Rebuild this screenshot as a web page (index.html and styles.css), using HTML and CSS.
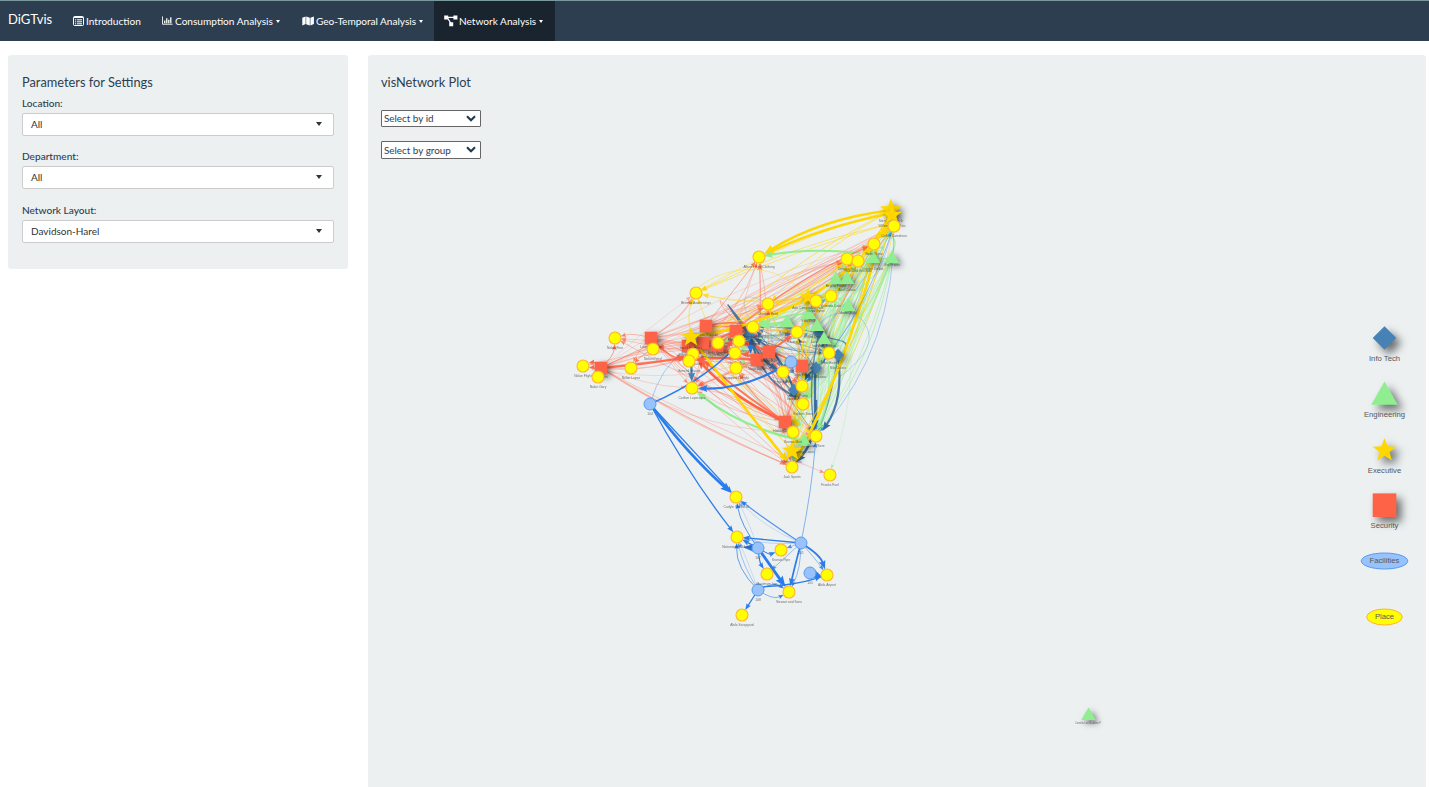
FILE: index.html
```html
<!DOCTYPE html>
<html lang="en">
<head>
<meta charset="utf-8">
<title>DiGTvis</title>
<link rel="stylesheet" href="styles.css">
</head>
<body>
<nav class="navbar">
  <span class="brand">DiGTvis</span>
  <a class="tab tab-intro"><svg class="icon" width="11" height="10" viewBox="0 0 11 10"><rect x=".5" y=".5" width="10" height="9" rx="1" fill="none" stroke="#fff"/><path d="M1 1.5h9M2 3.8h1.2M4 3.8h5M2 5.8h1.2M4 5.8h5M2 7.8h1.2M4 7.8h5" stroke="#fff"/></svg><span>Introduction</span></a>
  <a class="tab tab-consumption"><svg class="icon" width="11" height="10" viewBox="0 0 12 10"><path d="M.5 0v8.5H11.5" fill="none" stroke="#fff"/><path d="M3 7.5V4.5M5.2 7.5V2M7.4 7.5V3.5M9.6 7.5V1" stroke="#fff" stroke-width="1.4"/></svg><span>Consumption Analysis</span><i class="caret"></i></a>
  <a class="tab tab-geo"><svg class="icon" width="12" height="10" viewBox="0 0 12.6 10"><path d="M.3 1.6 3.8.2v8L.3 9.8zM4.4.2l3.8 1.4v8.2L4.4 8.3zM8.8 1.6 12.5.2v8L8.8 9.8z" fill="#fff"/></svg><span>Geo-Temporal Analysis</span><i class="caret"></i></a>
  <a class="tab tab-network"><svg class="icon" width="14" height="12" viewBox="0 0 14 12"><path d="M3 2.3h8M3.5 3l3.5 5.5" stroke="#fff" stroke-width="1.3"/><path d="M.2.5h4v4h-4zM9.4.5h4v4h-4zM5.2 7.2h4v4h-4z" fill="#fff"/></svg><span>Network Analysis</span><i class="caret"></i></a>
</nav>
<main class="layout">
  <section class="panel settings">
    <h4 class="title">Parameters for Settings</h4>
    <div class="field"><label class="label">Location:</label><div class="select"><span>All</span><i class="arrow"></i></div></div>
    <div class="field"><label class="label">Department:</label><div class="select"><span>All</span><i class="arrow"></i></div></div>
    <div class="field"><label class="label">Network Layout:</label><div class="select"><span>Davidson-Harel</span><i class="arrow"></i></div></div>
  </section>
  <section class="panel plot">
    <h4 class="title">visNetwork Plot</h4>
    <div class="picker"><span>Select by id</span><svg width="10" height="7" viewBox="0 0 10 7"><path d="M1 1.2 5 5.2 9 1.2" fill="none" stroke="#22384d" stroke-width="2.1"/></svg></div>
    <div class="picker"><span>Select by group</span><svg width="10" height="7" viewBox="0 0 10 7"><path d="M1 1.2 5 5.2 9 1.2" fill="none" stroke="#22384d" stroke-width="2.1"/></svg></div>
    <svg class="network" id="network" viewBox="381 166 1032 621" width="1032" height="621"></svg>
  </section>
</main>
<script src="network.js"></script>
</body>
</html>
```
FILE: styles.css
```css
* { box-sizing: border-box; }
body { margin: 0; height: 787px; overflow: hidden; background: #fff; color: #2c3e50; font-family: Lato, sans-serif; font-size: 10px; }
.navbar { display: flex; height: 41px; background: #2c3e50; border-top: 1px solid #7b9a9d; color: #fff; }
.brand { width: 63px; padding: 10px 0 0 8px; font-size: 13px; line-height: 17px; }
.tab { display: flex; align-items: center; height: 40px; padding: 0 10px; font-size: 10.1px; white-space: nowrap; }
.icon { flex: none; margin-right: 2px; }
.tab-network .icon { margin-right: 1px; }
.tab-intro { width: 89px; }
.tab-consumption { width: 140px; }
.tab-geo { width: 142px; }
.tab-geo span { letter-spacing: -.03px; }
.tab-network { width: 121px; background: #1a242f; }
.caret { width: 0; height: 0; margin-left: 3px; border: 2.5px solid transparent; border-top: 3px solid #fff; border-bottom: 0; }
.layout { display: grid; grid-template-columns: 340px 1058px; gap: 20px; align-items: start; padding: 14px 0 0 8px; }
.panel { background: #ecf0f1; border-radius: 3px; padding: 19px 14px 0; }
.settings { height: 214px; }
.title { margin: 0; font-size: 12.8px; line-height: 17px; font-weight: 400; }
.label { display: block; line-height: 14px; font-size: 10.1px; font-weight: 500; }
.field { height: 53.3px; }
.settings .title { margin-bottom: 5px; }
.select { display: flex; align-items: center; justify-content: space-between; height: 23px; margin-top: 3px; padding: 0 11px 1px 8px; background: #fff; border: 1px solid #ccc; border-radius: 2px; color: #333; }
.arrow { border: 3.5px solid transparent; border-top: 4px solid #333; border-bottom: 0; }
.plot { height: 732px; padding: 19px 13px 0; border-bottom-left-radius: 0; border-bottom-right-radius: 0; }
.plot .title { margin-bottom: 19px; }
.picker { display: flex; align-items: center; justify-content: space-between; width: 100px; height: 17px; padding: 0 4px 1px 2px; background: #fff; border: 1px solid #666; border-radius: 1px; margin-bottom: 14px; font-size: 9.9px; }
.picker + .picker { margin-bottom: 7px; height: 18px; }
.network { display: block; }
.node-label { font-family: "Liberation Sans", Arial, sans-serif; font-size: 3.3px; text-anchor: middle; fill: #343434; opacity: .7; }
.legend-label { font-family: "Liberation Sans", Arial, sans-serif; font-size: 7.7px; text-anchor: middle; fill: #55585a; }
.shadowed { filter: drop-shadow(3px 3px 3px rgba(0, 0, 0, .5)); }
.legend-shape { filter: drop-shadow(5px 5px 4px rgba(0, 0, 0, .55)); }
```
FILE: network.js
```javascript
const root = document.getElementById('network');
const NS = 'http://www.w3.org/2000/svg';
const RED = '#ff6347', GREEN = '#90ee90', GOLD = '#ffd700', BLUE = '#2b7ce9', NAVY = '#4682b4', DEEP = '#34689a';

function add(tag, attrs, text) {
  const el = document.createElementNS(NS, tag);
  for (const key in attrs) el.setAttribute(key, attrs[key]);
  if (text) el.textContent = text;
  root.appendChild(el);
  return el;
}

/* Curved edge with a notched arrowhead; bend is a fraction of the edge length. */
function edge(x1, y1, x2, y2, color, width, opacity, bend, gap = 6) {
  const dx = x2 - x1, dy = y2 - y1, len = Math.hypot(dx, dy) || 1;
  const cx = (x1 + x2) / 2 - dy * bend, cy = (y1 + y2) / 2 + dx * bend;
  const tl = Math.hypot(x2 - cx, y2 - cy) || 1;
  const ux = (x2 - cx) / tl, uy = (y2 - cy) / tl;
  const tx = x2 - ux * gap, ty = y2 - uy * gap;
  const s = 3 + width * 2.9, bx = tx - ux * s, by = ty - uy * s, w = s * .38;
  add('path', { d: `M${x1} ${y1}Q${cx} ${cy} ${bx + ux * s * .2} ${by + uy * s * .2}`, fill: 'none', stroke: color, 'stroke-width': width, 'stroke-opacity': opacity });
  if (len > 8) add('path', { d: `M${tx} ${ty}L${bx - uy * w} ${by + ux * w}L${bx + ux * s * .15} ${by + uy * s * .15}L${bx + uy * w} ${by - ux * w}Z`, fill: color, opacity: Math.min(1, opacity + .3) });
}

const places = [
  [759,257,"Albert's Fine Clothing"],[696,293,'Brewed Awakenings'],[768,304,'Chostus Hotel'],[615,338,'Nolan Fine'],
  [583,366,'Nolan Flight'],[598,377,'Nolan Gary'],[631,368,'Nolan Lopez'],[653,349,'Nolan Petrol'],
  [894,226,'Coffee Cameleon'],[874,244,'Bean There'],[847,259,'Desafio Golf'],[858,261,'Hallowed Grounds'],
  [831,296,'Katerina Cafe'],[816,301,'Guys Gyros'],[753,327,'Hippokampos'],[797,332,'Ouzeri Elian'],
  [739,341,'Kalami Kafenion'],[718,343,'Abila Zacharo'],[735,353,'GasTech'],[693,354,'Gelatogalore'],
  [689,361,'General Grocer'],[736,368,'Shoppers Delight'],[692,388,'Carlton Laperouse'],[829,353,'Brew Been'],
  [783,372,'Frydos Auto'],[802,386,'U-Pump'],[803,404,'Roberts Sons'],[793,432,'Kronos Mart'],
  [816,436,'Bean There'],[792,467,'Jack Sports'],[830,475,'Franks Fuel'],[736,497,'Carlyle Chemical'],
  [737,537,'Nationwide Refinery'],[781,550,'Kronos Pipe'],[767,574,'Maximum Iron'],[789,592,'Stewart and Sons'],
  [827,575,'Abila Airport'],[742,615,'Abila Scrapyard']
];
const squares = [[601,368],[651,338],[706,326],[736,331],[688,346],[703,343],[717,346],[757,360],[769,352],[802,366],[785,422]];
const triangles = [[892,258],[873,258],[836,279],[847,279],[848,306],[787,322],[809,314],[817,326],[824,339],[804,441]];
const diamonds = [[749,335],[819,333],[838,355],[816,368],[794,390]];
const facilities = [[791,362,'106'],[650,404,'104'],[758,548,'107'],[801,543,'101'],[810,573,'105'],[758,590,'108']];

/* Faint one-off visits of every employee to the places nearby */
let seed = 11;
const rand = () => (seed = (seed * 16807) % 2147483647) / 2147483647;
function visits(sources, targets, color, chance, opacity, east = false) {
  sources.forEach(s => targets.forEach(i => {
    if (rand() > chance) return;
    const p = places[i];
    let bend = (rand() - .5) * .3;
    if (east) bend = -Math.sign(p[1] - s[1]) * Math.abs(bend) * .85;
    edge(s[0], s[1], p[0], p[1], color, rand() < .1 ? 1.4 : .8, opacity * (.6 + rand() * .7), bend);
  }));
}
visits([[601,368],[651,338]], [1,2,8,9,10,12,14,15,16,18,19,20,22,24,27,29,6], RED, .8, .34);
visits(squares.slice(2), [0,8,9,10,11,2,12,13,14,15,16,17,18,21,22,23,24,25,27], RED, .64, .36);
visits(squares.slice(1), [3,4,7,14,16,18,19,22,24,26,27,28,29], RED, .3, .38);
visits(triangles.slice(0, 9), [8,9,10,11,12,13,15,23,28,27,26,25], GREEN, .72, .48, true);
visits(triangles, [14,15,17,18,21,24,29], GREEN, .45, .42);
visits([[892,258],[873,250],[848,306]], [23,25,26,27,28,29], GREEN, .8, .45, true);
visits(diamonds, [8,9,12,14,15,16,23,24,25,26,28], BLUE, .3, .35, true);
visits(diamonds, [14,15,16,23,24,25,26,28], DEEP, .45, .6);
visits([[892,210],[808,297],[691,337],[792,450]], [1,2,8,9,12,13,15,19,25,27,28], GOLD, .8, .6);

add('path', { d: 'M753 330C735 318 719 298 720 301C721 309 741 326 770 348', fill: 'none', stroke: RED, 'stroke-width': .9, opacity: .55 });
add('path', { d: 'M749 335C744 330 727 303 728 305C735 315 750 326 757 360', fill: 'none', stroke: DEEP, 'stroke-width': 1.5, opacity: .85 });
add('path', { d: 'M817 326C830 310 853 309 863 321C877 340 866 356 841 376', fill: 'none', stroke: BLUE, 'stroke-width': .7, opacity: .4 });
add('path', { d: 'M820 336C835 340 850 340 845 348', fill: 'none', stroke: DEEP, 'stroke-width': 1.4, opacity: .7 });
add('path', { d: 'M768 304C745 291 742 298 746 312L753 327', fill: 'none', stroke: '#a9b5bd', 'stroke-width': .7, opacity: .7 });
add('path', { d: 'M808 297C770 252 715 272 698 288', fill: 'none', stroke: GOLD, 'stroke-width': .8, opacity: .5 });
add('path', { d: 'M892 252C901 238 890 230 866 244', fill: 'none', stroke: GREEN, 'stroke-width': 1.4, opacity: .7 });

[
  [892,210,759,257,GOLD,2.5,1,.11],[892,213,759,257,GOLD,2.4,1,.06],[892,212,882,244,GOLD,2.5,1,.08],[894,220,874,244,GOLD,2.8,1,0],
  [880,232,858,261,GOLD,2.6,1,0],[808,297,753,327,GOLD,1.4,.8,-.05],
  [706,330,847,260,GOLD,1.2,.7,.12],
  [880,226,696,293,GOLD,.9,.6,.06],[691,337,696,293,GOLD,1,.6,-.16],
  [885,225,696,293,GOLD,.9,.55,.03],[860,253,758,257,GREEN,2,1,.07],[804,441,692,388,GREEN,2.3,1,-.12],
  [892,258,874,244,GREEN,1.5,.8,-.5],[892,258,816,436,GREEN,.9,.6,-.12],[892,258,803,404,GREEN,1.3,.5,-.1],
  [848,306,829,475,GREEN,.7,.4,-.12],[836,279,803,404,GREEN,1.5,.65,-.12],[824,339,815,436,GREEN,1.6,.7,-.17],
  [787,322,753,327,GREEN,3,.9,0],[809,314,753,327,GREEN,1.7,.8,.1],[892,258,829,353,GREEN,1.4,.5,-.1],
  [601,368,693,356,RED,2.3,.9,.02],[651,338,689,361,RED,1.6,.8,.15],[785,422,693,354,RED,2.7,1,-.1],
  [785,422,699,356,RED,2,.85,-.04],[785,422,736,368,RED,1.2,.6,-.1],[769,352,797,332,RED,1.8,.9,0],
  [802,366,718,343,RED,2,.8,.12],[736,331,689,361,RED,2.2,.8,.1],[706,326,753,327,RED,1.6,.8,-.12],
  [717,346,874,244,RED,1.3,.7,-.08],[601,368,615,338,RED,1,.6,.2],[601,364,583,364,RED,1,.7,.1],[601,370,583,368,RED,1,.6,.1],
  [757,360,735,353,RED,1.8,.8,.1],[651,338,792,467,RED,.7,.35,.07],[601,368,793,467,RED,.7,.35,.05],
  [601,368,830,475,RED,.7,.4,.03],[601,368,692,388,RED,.7,.35,.08],[651,338,785,422,RED,.8,.5,.12],
  [651,338,615,338,RED,.8,.5,.15],[653,349,631,368,RED,.8,.6,.1],
  [757,360,689,361,RED,2.4,.9,.06],[769,352,736,341,RED,2.2,.8,.06],
  [691,354,692,388,NAVY,2.2,1,0],[838,355,819,436,DEEP,2.2,.9,-.19],[749,335,783,372,DEEP,1.9,.9,.18],
  [815,368,815,436,DEEP,2.4,.9,0],[816,400,792,467,DEEP,2.4,.9,-.2],[816,368,802,386,DEEP,1.6,.9,.1],
  [794,390,749,335,DEEP,1.8,.9,.18],[819,333,816,436,DEEP,1.4,.7,.1],[749,335,802,400,DEEP,1.8,.8,.22],
  [691,337,858,261,GOLD,2.6,1,.14],[691,337,792,467,GOLD,2.5,1,.01],[878,244,792,467,GOLD,2.6,1,-.06],[869,261,792,467,GOLD,1.3,.8,-.08],
  [887,235,792,450,GOLD,1.2,.7,-.09],
  [791,362,692,388,BLUE,2.2,1,-.15],[650,404,753,327,BLUE,1.4,1,.12],[750,335,751,360,BLUE,2,1,0],
  [650,404,736,497,BLUE,2.8,1,.05],[650,404,736,497,BLUE,1.3,1,0],[650,404,737,537,BLUE,1.3,1,.04],
  [650,404,693,345,BLUE,.7,.5,-.18],[801,543,816,436,BLUE,.9,.6,.03],[894,226,816,436,BLUE,.7,.5,-.19],
  [894,226,803,386,BLUE,1,.45,-.1],[758,548,736,497,BLUE,1,.8,-.12],[758,548,736,497,BLUE,.6,.3,.03],
  [801,543,736,497,BLUE,1.2,.8,-.02],[801,543,736,497,BLUE,.7,.3,-.11],[801,543,737,537,BLUE,1.4,1,0],
  [801,543,737,537,BLUE,.7,.35,-.08],[758,548,737,547,BLUE,3,1,0],[758,548,737,537,BLUE,1.4,1,0],
  [758,548,789,592,BLUE,2.8,1,0],[758,548,767,574,BLUE,1.2,1,.12],[758,548,781,550,BLUE,1.2,1,.25],
  [758,590,737,537,BLUE,1,.7,-.22],[758,590,737,537,BLUE,.8,.5,-.09],[758,590,789,592,BLUE,1,.8,-.3],
  [758,590,789,592,BLUE,.8,.7,.3],[758,587,827,575,BLUE,1.2,1,.07],[758,590,742,615,BLUE,1.2,1,0],
  [801,543,827,575,BLUE,2,1,-.18],[801,543,827,575,BLUE,.8,.6,-.03],[801,543,789,592,BLUE,1.7,1,.01],
  [801,543,789,592,BLUE,.8,.6,-.12],[801,543,767,574,BLUE,.8,.55,0],[801,543,781,550,BLUE,.8,.55,0],
  [806,571,829,580,BLUE,3.4,1,0],[758,590,737,537,BLUE,.6,.3,.02]
].forEach(e => edge(...e));

function label(x, y, text) { add('text', { x, y, class: 'node-label' }, text); }
function triangle(x, y, r, cls) { add('path', { d: `M${x} ${y - r * 1.05}L${x + r} ${y + r * .7}H${x - r}Z`, fill: GREEN, class: cls }); }
function diamond(x, y, r, cls) { add('path', { d: `M${x} ${y - r}L${x + r} ${y}L${x} ${y + r}L${x - r} ${y}Z`, fill: NAVY, class: cls }); }
function square(x, y, r, cls) { add('rect', { x: x - r, y: y - r, width: 2 * r, height: 2 * r, fill: RED, class: cls }); }
function star(x, y, r, cls) {
  const pts = [];
  for (let i = 0; i < 10; i++) {
    const q = i % 2 ? r * .42 : r, a = Math.PI * i / 5;
    pts.push(`${x + q * Math.sin(a)},${y - q * Math.cos(a)}`);
  }
  add('polygon', { points: pts.join(' '), fill: GOLD, class: cls });
}

const staff = ['Isia Vann', 'Loreto Bodrogi', 'Hennie Osvaldo', 'Minke Mies', 'Edvard Vann', 'Felix Resumir', 'Kanon Herrero', 'Varja Lagos', 'Stenig Fusil', 'Inga Ferro', 'Hideki Cocinaro'];
const engineers = ['Vira Frente', 'Lidelse Dedos', 'Birgitta Frente', 'Axel Calzas', 'Marin Onda', 'Kare Orilla', 'Elsa Orilla', 'Brand Tempestad', 'Isande Borrasca', 'Gustav Cazar'];
const tech = ['Linnea Bergen', 'Lars Azada', 'Nils Calixto', 'Lucas Alcazar', 'Isak Baza'];
diamonds.forEach(([x, y], i) => { diamond(x, y, 6.2, 'shadowed'); label(x, y + (i === 2 ? 14 : 10), tech[i]); });
triangles.forEach(([x, y], i) => { triangle(x, y, 7.3, 'shadowed'); label(x, y + (i % 2 ? 11.5 : 8), engineers[i]); });
squares.forEach(([x, y], i) => { square(x, y, 6.3, 'shadowed'); label(x, y + (i === 5 ? 15 : 10), staff[i]); });
[[891,210,11.5,'Sten Sanjorge Jr'],[892,215,10.5,'Willem Vasco-Pais'],[808,297,9,'Ada Campo-Corrente'],[691,337,10.5,'Ingrid Barranco'],[792,451,10.5,'Orhan Strum']]
  .forEach(([x, y, r, name]) => { star(x, y, r, 'shadowed'); label(x, y + 12, name); });
facilities.forEach(([x, y, name]) => { add('circle', { cx: x, cy: y, r: 6, fill: '#97c2fc', stroke: '#5b9bed', 'stroke-width': 1 }); label(x, y + 10.5, name); });
places.forEach(([x, y, name]) => { add('circle', { cx: x, cy: y, r: 6, fill: '#ffff00', stroke: '#ffb52e', 'stroke-width': 1.1 }); label(x, y + 11, name); });
triangle(1088.5, 715, 7.2, 'shadowed');
add('text', { x: 1088, y: 723.5, class: 'node-label', textLength: 26, lengthAdjust: 'spacingAndGlyphs' }, 'Cornelia Lais Madeline F');

diamond(1384.5, 338, 11.8, 'legend-shape');
triangle(1384.5, 395.5, 13.3, 'legend-shape');
star(1384.5, 450.5, 12.5, 'legend-shape');
square(1384.5, 505.2, 11.8, 'legend-shape');
add('ellipse', { cx: 1384.5, cy: 561, rx: 23.3, ry: 8, fill: '#97c2fc', stroke: '#5b9bed', 'stroke-width': 1 });
add('ellipse', { cx: 1384.5, cy: 617, rx: 17.8, ry: 8, fill: '#ffff00', stroke: '#ffb52e', 'stroke-width': 1 });
[['Info Tech', 361], ['Engineering', 417], ['Executive', 473], ['Security', 528], ['Facilities', 563], ['Place', 619]]
  .forEach(([text, y]) => add('text', { x: 1384.5, y, class: 'legend-label' }, text));
```
